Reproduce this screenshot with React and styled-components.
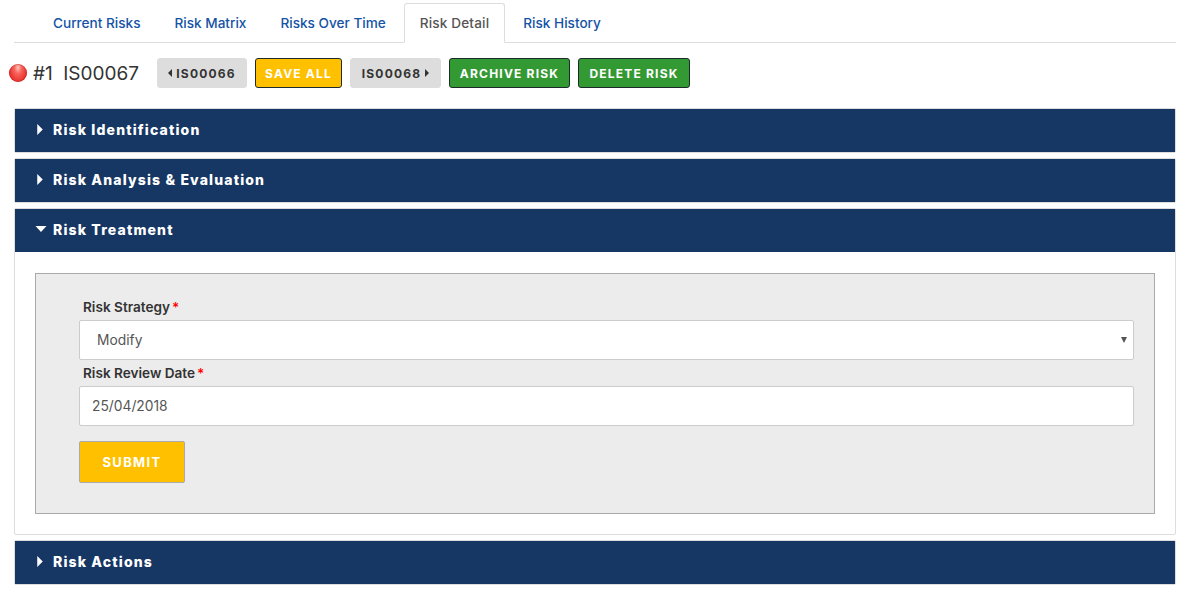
import React from 'react';
import styled, { createGlobalStyle } from 'styled-components';

const FONT = `Inter, "Open Sans", "Liberation Sans", sans-serif`;

const GlobalStyle = createGlobalStyle`
  html, body { margin: 0; padding: 0; background: #fff; }
  body { font-family: ${FONT}; color: #333; }
  * { box-sizing: border-box; }
`;

const Page = styled.div`
  width: 1189px;
  height: 593px;
  overflow: hidden;
  padding: 3px 13px 0 14px;
`;

const Tabs = styled.ul`
  display: flex;
  list-style: none;
  margin: 0;
  padding: 0 0 0 23px;
  height: 40px;
  border-bottom: 1px solid #ddd;
`;

const Tab = styled.li`
  height: 40px;
  margin-right: 2px;
  padding: 0 15px;
  display: flex;
  align-items: center;
  font-size: 13.6px;
  font-weight: 500;
  letter-spacing: ${p => (p.$active ? '0.15px' : '0')};
  color: ${p => (p.$active ? '#555' : '#1553a5')};
  background: ${p => (p.$active ? '#fff' : 'transparent')};
  border: 1px solid ${p => (p.$active ? '#ddd' : 'transparent')};
  border-bottom-color: ${p => (p.$active ? '#fff' : 'transparent')};
  border-radius: 3px 3px 0 0;
`;

const Toolbar = styled.div`
  display: flex;
  align-items: center;
  height: 30px;
  margin: 15px 0 20px -5px;
`;

const Dot = styled.span`
  width: 18px;
  height: 18px;
  border-radius: 50%;
  background: radial-gradient(ellipse at 50% 20%, #ffc4bc 0, #f8635a 30%, #e8312c 72%, #d0302c 100%);
  box-shadow: inset 0 0 0 1px rgba(170, 30, 30, 0.4);
  margin-right: 6px;
`;

const RiskTitle = styled.h1`
  margin: 0 18px 0 0;
  width: 106px;
  display: flex;
  justify-content: space-between;
  font-size: 19px;
  font-weight: 400;
  color: #333;
  white-space: nowrap;
`;

const ActionButton = styled.button`
  height: 30px;
  width: ${p => p.$w}px;
  margin-right: 8px;
  padding: 0;
  display: flex;
  align-items: center;
  justify-content: center;
  gap: 4px;
  font-family: ${FONT};
  font-size: 12px;
  font-weight: 700;
  letter-spacing: 1.2px;
  white-space: nowrap;
  border-radius: 3px;
  color: ${p => (p.$kind === 'plain' ? '#333' : '#fff')};
  background: ${p => ({ plain: '#ddd', amber: '#ffc000', green: '#339933' }[p.$kind])};
  border: 1px solid ${p => (p.$kind === 'plain' ? '#ddd' : '#1c2b2b')};
`;

const Caret = styled.svg`
  flex: none;
  fill: currentColor;
`;

const Accordion = styled.div`
  display: flex;
  flex-direction: column;
  gap: 5px;
  width: 1162px;
`;

const Section = styled.section`
  border: 1px solid #ddd;
  border-radius: 2px;
`;

const SectionHead = styled.h3`
  margin: 0;
  height: 43px;
  display: flex;
  align-items: center;
  padding: 0 0 2px 20px;
  background: #163663;
  color: #fff;
  font-size: 14px;
  font-weight: 800;
  letter-spacing: 1.15px;
`;

const HeadIcon = styled.span`
  width: 18px;
  flex: none;
  display: flex;
  padding-left: ${p => (p.$open ? 0 : 2)}px;
  margin-top: -1px;
`;

const SectionBody = styled.div`
  height: 282px;
  padding: 21px 20px 0;
`;

const FormBox = styled.form`
  height: 241px;
  padding: 25px 20px 0 43px;
  background: #ececec;
  border: 1px solid #aaa;
`;

const Label = styled.label`
  display: block;
  height: 21px;
  padding: 0 0 0 4px;
  font-size: 13.6px;
  font-weight: 600;
  line-height: 16px;
  color: #333;
`;

const Required = styled.span`
  color: #f00;
  margin-left: 2px;
`;

const Field = styled.div`
  position: relative;
  height: 40px;
  margin-bottom: ${p => p.$mb}px;
  padding-left: ${p => p.$pad}px;
  display: flex;
  align-items: center;
  font-size: 13.8px;
  color: #555;
  background: #fff;
  border: 1px solid #ccc;
  border-radius: 2px;
`;

const SelectArrow = styled.span`
  position: absolute;
  right: 6px;
  top: 16px;
  width: 0;
  height: 0;
  border-left: 3.5px solid transparent;
  border-right: 3.5px solid transparent;
  border-top: 6px solid #555;
`;

const SubmitButton = styled.button`
  display: block;
  width: 106px;
  height: 42px;
  padding: 0;
  font-family: ${FONT};
  font-size: 13px;
  font-weight: 700;
  letter-spacing: 1.3px;
  color: #fff;
  background: #ffc000;
  border: 1px solid #aaa;
  border-radius: 2px;
`;

const Right = ({ w = 6, h = 11 }) => (
  <Caret width={w} height={h} viewBox="0 0 5 10"><path d="M0 0l5 5-5 5z" /></Caret>
);
const Left = ({ w = 6, h = 11 }) => (
  <Caret width={w} height={h} viewBox="0 0 5 10"><path d="M5 0L0 5l5 5z" /></Caret>
);
const Down = () => (
  <Caret width="12" height="6" viewBox="0 0 11 6"><path d="M0 0h11L5.5 6z" /></Caret>
);

const Head = ({ title, open }) => (
  <SectionHead>
    <HeadIcon $open={open}>{open ? <Down /> : <Right />}</HeadIcon>
    {title}
  </SectionHead>
);

export default function App() {
  return (
    <Page>
      <GlobalStyle />
      <Tabs>
        <Tab>Current Risks</Tab>
        <Tab>Risk Matrix</Tab>
        <Tab>Risks Over Time</Tab>
        <Tab $active>Risk Detail</Tab>
        <Tab>Risk History</Tab>
      </Tabs>
      <Toolbar>
        <Dot />
        <RiskTitle><span>#1</span><span>IS00067</span></RiskTitle>
        <ActionButton $kind="plain" $w={90}><Left w={4} h={8} />IS00066</ActionButton>
        <ActionButton $kind="amber" $w={87}>SAVE ALL</ActionButton>
        <ActionButton $kind="plain" $w={91}>IS00068<Right w={4} h={8} /></ActionButton>
        <ActionButton $kind="green" $w={121}>ARCHIVE RISK</ActionButton>
        <ActionButton $kind="green" $w={112}>DELETE RISK</ActionButton>
      </Toolbar>
      <Accordion>
        <Section><Head title="Risk Identification" /></Section>
        <Section><Head title="Risk Analysis & Evaluation" /></Section>
        <Section>
          <Head title="Risk Treatment" open />
          <SectionBody>
            <FormBox>
              <Label>Risk Strategy<Required>*</Required></Label>
              <Field $pad={17} $mb={5}>Modify<SelectArrow /></Field>
              <Label>Risk Review Date<Required>*</Required></Label>
              <Field $pad={12} $mb={15}>25/04/2018</Field>
              <SubmitButton type="button">SUBMIT</SubmitButton>
            </FormBox>
          </SectionBody>
        </Section>
        <Section><Head title="Risk Actions" /></Section>
      </Accordion>
    </Page>
  );
}
